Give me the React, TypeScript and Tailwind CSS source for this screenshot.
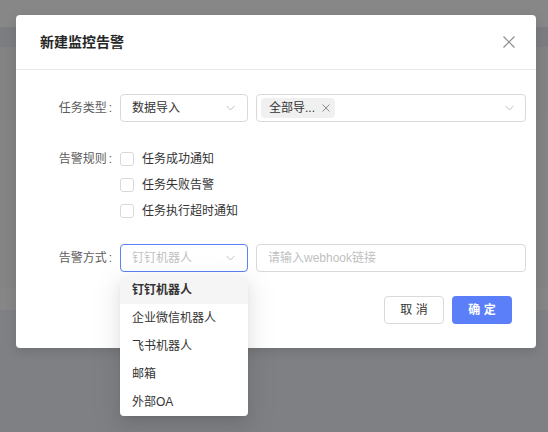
import React from "react";

const font = {
  fontFamily: '"Liberation Sans", "Noto Sans CJK SC", sans-serif',
};

function Chevron() {
  return (
    <svg width="9" height="6" viewBox="0 0 9 6" fill="none" className="shrink-0">
      <path d="M0.5 0.8 L4.5 5 L8.5 0.8" stroke="#c4c4c4" strokeWidth="1" />
    </svg>
  );
}

function Label({ text }: { text: string }) {
  return (
    <div className="flex w-[104px] shrink-0 items-center justify-end text-[12px] leading-[20px] text-[#5c5c5c]">
      <span>{text}</span>
      <span className="ml-[2px] mr-[8px]">:</span>
    </div>
  );
}

function Checkbox({ text }: { text: string }) {
  return (
    <label className="flex h-[26px] items-center">
      <span className="h-[14px] w-[14px] rounded-[3px] border border-[#d9d9d9] bg-white" />
      <span className="ml-[8px] text-[12px] leading-[20px] text-[#333]">{text}</span>
    </label>
  );
}

const channels = ["钉钉机器人", "企业微信机器人", "飞书机器人", "邮箱", "外部OA"];

export default function App() {
  return (
    <div className="relative flex h-[432px] w-[548px] flex-col overflow-hidden" style={font}>
      {/* dimmed page under the dialog mask */}
      <div className="h-[27px] bg-[#878788]" />
      <div className="h-[20px] bg-[#7c7d81]" />
      <div className="h-[71px] bg-[#838384]" />
      <div className="h-[170px] bg-[#848485]" />
      <div className="h-[22px] bg-[#868687]" />
      <div className="flex-1 bg-[#7f8084]" />

      {/* dialog */}
      <div className="absolute left-[16px] top-[15px] w-[520px] rounded-[4px] bg-white shadow-[0_4px_12px_rgba(0,0,0,0.12)]">
        <div className="flex h-[55px] items-center justify-between border-b border-[#e8e8e8] pl-[24px] pr-[21px]">
          <span className="text-[14px] font-bold leading-[22px] text-[#262626]">新建监控告警</span>
          <svg width="12" height="12" viewBox="0 0 12 12" fill="none">
            <path d="M0.5 0.5 L11.5 11.5 M11.5 0.5 L0.5 11.5" stroke="#8c8c8c" strokeWidth="1.2" />
          </svg>
        </div>

        <div className="flex flex-col pb-[24px] pr-[10px] pt-[24px]">
          {/* task type */}
          <div className="flex items-center">
            <Label text="任务类型" />
            <div className="flex h-[28px] w-[128px] shrink-0 items-center justify-between rounded-[4px] border border-[#d9d9d9] pl-[11px] pr-[12px]">
              <span className="text-[12px] leading-[20px] text-[#333]">数据导入</span>
              <Chevron />
            </div>
            <div className="ml-[8px] flex h-[28px] flex-1 items-center justify-between rounded-[4px] border border-[#d9d9d9] pl-[4px] pr-[11px]">
              <span className="flex h-[20px] items-center rounded-[4px] bg-[#f0f0f0] pl-[8px] pr-[5px]">
                <span className="text-[12px] leading-[20px] text-[#333]">全部导...</span>
                <svg width="8" height="8" viewBox="0 0 8 8" fill="none" className="ml-[7px]">
                  <path d="M0.5 0.5 L7.5 7.5 M7.5 0.5 L0.5 7.5" stroke="#8c8c8c" strokeWidth="1" />
                </svg>
              </span>
              <Chevron />
            </div>
          </div>

          {/* alert rules */}
          <div className="mt-[24px] flex items-start">
            <div className="flex h-[26px] items-center">
              <Label text="告警规则" />
            </div>
            <div className="flex flex-col">
              <Checkbox text="任务成功通知" />
              <Checkbox text="任务失败告警" />
              <Checkbox text="任务执行超时通知" />
            </div>
          </div>

          {/* alert channel */}
          <div className="mt-[20px] flex items-center">
            <Label text="告警方式" />
            <div className="relative w-[128px] shrink-0">
              <div className="flex h-[28px] items-center justify-between rounded-[4px] border border-[#5b80f7] pl-[11px] pr-[12px]">
                <span className="text-[12px] leading-[20px] text-[#bfbfbf]">钉钉机器人</span>
                <Chevron />
              </div>
              <ul className="absolute left-0 top-[32px] z-10 w-[128px] overflow-hidden rounded-[4px] bg-white shadow-[0_3px_6px_-4px_rgba(0,0,0,0.12),0_6px_16px_0_rgba(0,0,0,0.08),0_9px_28px_8px_rgba(0,0,0,0.05)]">
                {channels.map((c, i) => (
                  <li
                    key={c}
                    className={
                      i === 0
                        ? "flex h-[28px] items-center bg-[#f5f5f5] px-[12px] text-[12px] font-bold text-[#333]"
                        : "flex h-[28px] items-center px-[12px] text-[12px] text-[#333]"
                    }
                  >
                    {c}
                  </li>
                ))}
              </ul>
            </div>
            <div className="ml-[8px] flex h-[28px] flex-1 items-center rounded-[4px] border border-[#d9d9d9] px-[11px]">
              <span className="text-[12px] leading-[20px] text-[#bfbfbf]">请输入webhook链接</span>
            </div>
          </div>

          {/* footer */}
          <div className="mt-[24px] flex justify-end gap-[8px] pr-[14px]">
            <button className="flex h-[28px] w-[60px] items-center justify-center rounded-[4px] border border-[#d9d9d9] bg-white text-[12px] text-[#333]">
              取 消
            </button>
            <button className="flex h-[28px] w-[60px] items-center justify-center rounded-[4px] bg-[#5b7ff8] text-[12px] font-bold text-white">
              确 定
            </button>
          </div>
        </div>
      </div>
    </div>
  );
}
